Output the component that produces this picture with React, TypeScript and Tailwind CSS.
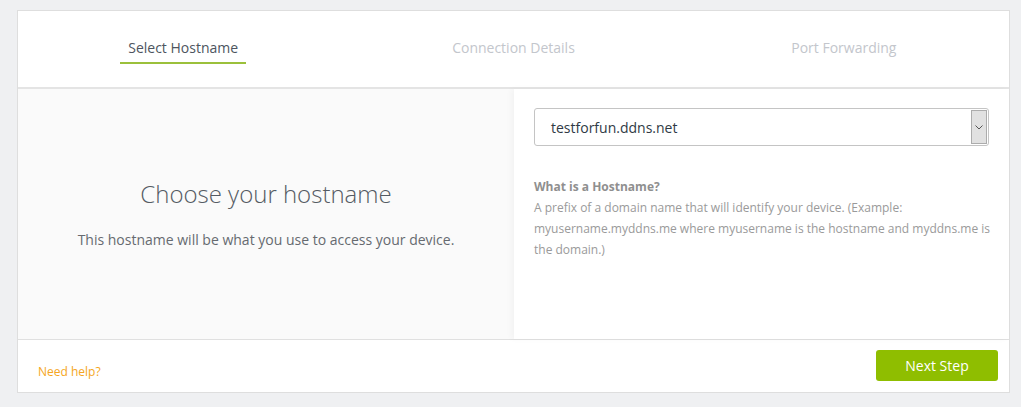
const tabs = ['Select Hostname', 'Connection Details', 'Port Forwarding'];

export default function App() {
  return (
    <div
      className="min-h-[407px] w-[1021px] bg-[#eff0f2] pt-[10px]"
      style={{ fontFamily: '"Open Sans", "Noto Sans", sans-serif' }}
    >
      <div className="ml-[17px] w-[993px] border border-[#dedede] bg-white">
        {/* step tabs */}
        <div className="grid h-[78px] grid-cols-3 border-b-2 border-[#e4e4e4]">
          {tabs.map((t, i) => (
            <div key={t} className="flex items-start justify-center pt-[27px]">
              <div
                className={
                  i === 0
                    ? 'border-b-2 border-[#9bc03b] px-2 pb-[4px] text-[14px] leading-[20px] text-[#4d5560]'
                    : 'px-2 pb-[4px] text-[14px] leading-[20px] text-[#c3c6cc]'
                }
              >
                {t}
              </div>
            </div>
          ))}
        </div>

        {/* body */}
        <div className="flex h-[250px]">
          <div className="flex w-[496px] flex-col items-center justify-center bg-[#fafafa]">
            <h2 className="text-[24px] font-light leading-[32px] text-[#555b63]">Choose your hostname</h2>
            <p className="mt-[20px] text-[14px] leading-[20px] text-[#666a70]">
              This hostname will be what you use to access your device.
            </p>
          </div>
          <div className="flex-1 bg-white px-[20px] pt-[19px] shadow-[-3px_0_6px_rgba(0,0,0,0.03)]">
            <div className="flex h-[38px] items-center rounded-[3px] border border-[#c4c4c4] bg-white pl-[16px] pr-[1px]">
              <span className="flex-1 text-[14px] text-[#2f3a45]">testforfun.ddns.net</span>
              <span className="flex h-[34px] w-[16px] items-center justify-center border border-[#acacac] bg-[#e1e1e1]">
                <svg width="8" height="5" viewBox="0 0 8 5" fill="none">
                  <path d="M0.5 0.5 L4 4 L7.5 0.5" stroke="#555" strokeWidth="1" />
                </svg>
              </span>
            </div>
            <div className="mr-[-6px] mt-[30px] text-[12px] leading-[21px] text-[#9a9a9a]">
              <div className="font-bold text-[#8f8f8f]">What is a Hostname?</div>
              <p>
                A prefix of a domain name that will identify your device. (Example: myusername.myddns.me where
                myusername is the hostname and myddns.me is the domain.)
              </p>
            </div>
          </div>
        </div>

        {/* footer */}
        <div className="flex h-[53px] items-start justify-between border-t border-[#e0e0e0] pl-[20px] pr-[11px] pt-[10px]">
          <a className="mt-[13px] text-[12px] leading-[18px] text-[#f5a623]">Need help?</a>
          <button className="h-[31px] w-[122px] rounded-[3px] bg-[#8fbe00] text-[14px] text-white">Next Step</button>
        </div>
      </div>
    </div>
  );
}
